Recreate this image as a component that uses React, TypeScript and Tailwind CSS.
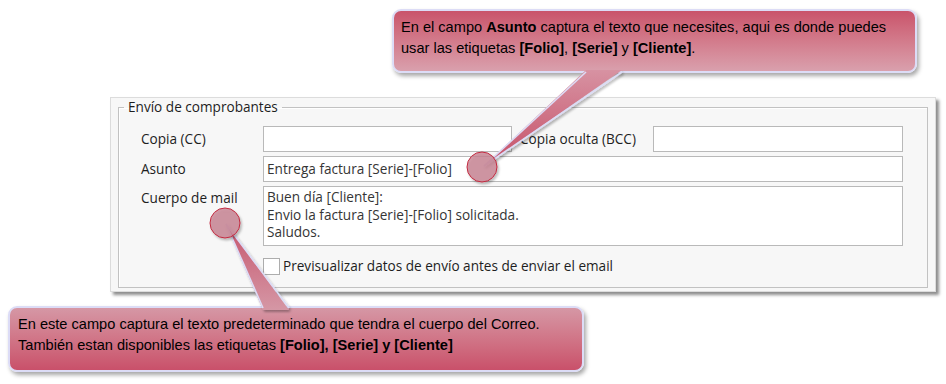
const ui = "font-['Segoe_UI','Open_Sans','Noto_Sans',sans-serif]";
const note = "font-['Liberation_Sans',Arial,sans-serif]";

function Callout1() {
  return (
    <div
      className={`ml-[392px] mt-[9px] h-[64px] w-[525px] rounded-[9px] border-2 border-[#dcdcf6] bg-gradient-to-b from-[#c9536b] to-[#d9a0ad] px-[7px] pt-[6px] text-[14.6px] leading-[21px] text-black shadow-[2px_3px_4px_rgba(0,0,0,0.35)] ${note}`}
    >
      <p>
        En el campo <b>Asunto</b> captura el texto que necesites, aqui es donde puedes
      </p>
      <p>
        usar las etiquetas <b>[Folio]</b>, <b>[Serie]</b> y <b>[Cliente]</b>.
      </p>
    </div>
  );
}

function Callout2() {
  return (
    <div
      className={`ml-[8px] mt-[14px] h-[66px] w-[576px] rounded-[9px] border-2 border-[#dcdcf6] bg-gradient-to-b from-[#d597a5] to-[#c9506a] px-[8px] pt-[6px] text-[14.6px] leading-[21px] text-black shadow-[2px_3px_4px_rgba(0,0,0,0.35)] ${note}`}
    >
      <p>En este campo captura el texto predeterminado que tendra el cuerpo del Correo.</p>
      <p>
        También estan disponibles las etiquetas <b>[Folio], [Serie] y [Cliente]</b>
      </p>
    </div>
  );
}

function Field({ className = "", children }: { className?: string; children?: React.ReactNode }) {
  return (
    <div className={`border border-[#b9b9b9] bg-white px-[3px] text-[#353535] ${className}`}>{children}</div>
  );
}

function Panel() {
  return (
    <div
      className={`ml-[110px] mt-[24px] h-[195px] w-[826px] border border-[#dcdcdc] bg-[#f7f7f7] pl-[7px] pr-[7px] shadow-[3px_3px_3px_rgba(0,0,0,0.45)] ${ui} text-[13.6px] text-[#1e1e1e]`}
    >
      <fieldset className="mt-[1px] h-[189px] border border-[#c2c2c2] pl-[22px] pr-[24px] pt-[11px] shadow-[inset_1px_1px_0_#fff]">
        <legend className="ml-[-17px] px-[4px] leading-[16px]">Envío de comprobantes</legend>
        <div className="flex flex-col gap-[4px]">
          <div className="flex h-[26px] items-center">
            <span className="w-[122px]">Copia (CC)</span>
            <Field className="h-[26px] w-[249px]" />
            <span className="ml-[8px] w-[133px]">Copia oculta (BCC)</span>
            <Field className="h-[26px] flex-1" />
          </div>
          <div className="flex h-[26px] items-center">
            <span className="w-[122px]">Asunto</span>
            <Field className="flex h-[26px] flex-1 items-center">Entrega factura [Serie]-[Folio]</Field>
          </div>
          <div className="flex h-[60px]">
            <span className="w-[122px] pt-[2px]">Cuerpo de mail</span>
            <Field className="h-[60px] flex-1 pt-[1px] leading-[17.5px]">
              <p>Buen día [Cliente]:</p>
              <p>Envio la factura [Serie]-[Folio] solicitada.</p>
              <p>Saludos.</p>
            </Field>
          </div>
          <div className="mt-[7px] flex h-[18px] items-center pl-[122px]">
            <span className="h-[17px] w-[17px] border border-[#adadad] bg-white" />
            <span className="ml-[3px]">Previsualizar datos de envío antes de enviar el email</span>
          </div>
        </div>
      </fieldset>
    </div>
  );
}

function Pointers() {
  return (
    <svg className="pointer-events-none absolute inset-0" width="946" height="384">
      <defs>
        <linearGradient id="t1" x1="0" y1="0" x2="0" y2="1">
          <stop offset="0" stopColor="#d792a2" />
          <stop offset="1" stopColor="#c65068" />
        </linearGradient>
        <linearGradient id="t2" x1="0" y1="0" x2="0" y2="1">
          <stop offset="0" stopColor="#c6566e" />
          <stop offset="1" stopColor="#d597a5" />
        </linearGradient>
        <filter id="sh" x="-20%" y="-20%" width="140%" height="140%">
          <feDropShadow dx="1.5" dy="2" stdDeviation="1.2" floodColor="#000" floodOpacity="0.3" />
        </filter>
      </defs>
      <g filter="url(#sh)">
        <polygon points="586,70 622,70 484,166" fill="url(#t1)" />
        <line x1="586" y1="72" x2="484" y2="166" stroke="#dcdcf6" strokeWidth="1.6" />
        <line x1="622" y1="72" x2="484" y2="166" stroke="#dcdcf6" strokeWidth="1.6" />
      </g>
      <g filter="url(#sh)">
        <polygon points="226,224 263,310 289,310" fill="url(#t2)" />
        <line x1="226" y1="224" x2="263" y2="308" stroke="#dcdcf6" strokeWidth="1.6" />
        <line x1="226" y1="224" x2="289" y2="308" stroke="#dcdcf6" strokeWidth="1.6" />
      </g>
      <circle cx="482" cy="167" r="15" fill="#c98593" fillOpacity="0.8" stroke="#c22a40" strokeWidth="1" filter="url(#sh)" />
      <circle cx="225" cy="223" r="15" fill="#c98593" fillOpacity="0.8" stroke="#c22a40" strokeWidth="1" filter="url(#sh)" />
    </svg>
  );
}

export default function App() {
  return (
    <div className="relative flex h-[384px] w-[946px] flex-col overflow-hidden bg-white">
      <Callout1 />
      <Panel />
      <Callout2 />
      <Pointers />
    </div>
  );
}
